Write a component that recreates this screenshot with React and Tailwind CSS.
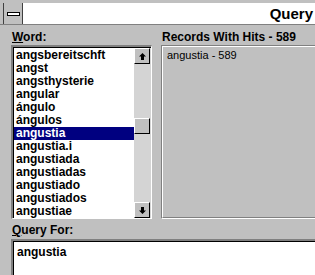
import React from 'react';

const words = [
  'angsbereitschft',
  'angst',
  'angsthysterie',
  'angular',
  'ángulo',
  'ángulos',
  'angustia',
  'angustia.i',
  'angustiada',
  'angustiadas',
  'angustiado',
  'angustiados',
  'angustiae',
];

const ArrowUp = () => (
  <svg width="7" height="7" viewBox="0 0 7 7">
    <path d="M3.5 0 L7 3.5 L5 3.5 L5 7 L2 7 L2 3.5 L0 3.5 Z" fill="#000" />
  </svg>
);

const ArrowDown = () => (
  <svg width="7" height="7" viewBox="0 0 7 7">
    <path d="M3.5 7 L7 3.5 L5 3.5 L5 0 L2 0 L2 3.5 L0 3.5 Z" fill="#000" />
  </svg>
);

const ScrollButton = ({ children }) => (
  <div className="h-[16px] w-[16px] border-t border-l border-t-white border-l-white border-r border-b border-r-black border-b-black bg-[#c0c0c0] flex items-center justify-center">
    {children}
  </div>
);

export default function App() {
  return (
    <div
      className="w-[315px] h-[275px] bg-[#c0c0c0] overflow-hidden flex flex-col text-black"
      style={{ fontFamily: '"Liberation Sans", Arial, sans-serif' }}
    >
      {/* title bar */}
      <div className="h-[25px] flex pt-[3px] pl-[3px] border-b border-b-[#808080]">
        <div className="w-[20px] h-[21px] border-l border-r border-[#404040] bg-[#c0c0c0] flex items-center justify-center">
          <div className="w-[13px] h-[4px] bg-white border border-black" />
        </div>
        <div className="flex-1 h-[21px] bg-white flex items-center justify-end pr-[2px]">
          <span className="text-[15px] font-bold leading-none">Query</span>
        </div>
      </div>

      {/* main */}
      <div className="flex pt-[4px]">
        <div className="ml-[11px] w-[141px] flex flex-col">
          <div className="h-[16px] text-[12px] font-bold leading-[16px] pl-[1px]">
            <span className="underline underline-offset-1">W</span>ord:
          </div>
          <div className="h-[174px] border-t-2 border-l-2 border-t-[#808080] border-l-[#808080] border-r border-b border-r-white border-b-white flex">
            <div className="flex-1 flex flex-col pt-[1px] bg-white border-t border-l border-black">
              {words.map((w) => (
                <div
                  key={w}
                  className={
                    'h-[13px] leading-[13px] text-[12px] font-bold pl-[2px] ' +
                    (w === 'angustia' ? 'bg-[#000080] text-white' : '')
                  }
                >
                  {w}
                </div>
              ))}
            </div>
            <div className="w-[17px] flex flex-col border-t border-black bg-[#d4d4d4]">
              <ScrollButton>
                <ArrowUp />
              </ScrollButton>
              <div className="h-[54px]" />
              <ScrollButton />
              <div className="flex-1" />
              <ScrollButton>
                <ArrowDown />
              </ScrollButton>
            </div>
          </div>
        </div>

        <div className="ml-[9px] flex-1 flex flex-col">
          <div className="h-[16px] text-[12px] font-bold leading-[16px] pl-[1px]">
            Records With Hits - 589
          </div>
          <div className="h-[174px] border-t border-l border-t-[#808080] border-l-[#808080] border-b border-b-white">
            <div className="h-full border-t border-l border-t-white border-l-white border-b border-b-[#808080] pl-[4px] pt-[2px]">
              <div className="text-[11px] leading-[12px]">angustia - 589</div>
            </div>
          </div>
        </div>
      </div>

      {/* query for */}
      <div className="ml-[11px] mt-[3px] h-[16px] text-[12px] font-bold leading-[16px] pl-[1px]">
        <span className="underline underline-offset-1">Q</span>uery For:
      </div>
      <div className="ml-[11px] mt-[1px] flex-1 border-t-2 border-l-2 border-t-[#808080] border-l-[#808080]">
        <div className="h-full bg-white border-t border-l border-black pl-[3px] pt-[3px]">
          <div className="text-[12px] font-bold leading-[14px]">angustia</div>
        </div>
      </div>
    </div>
  );
}
